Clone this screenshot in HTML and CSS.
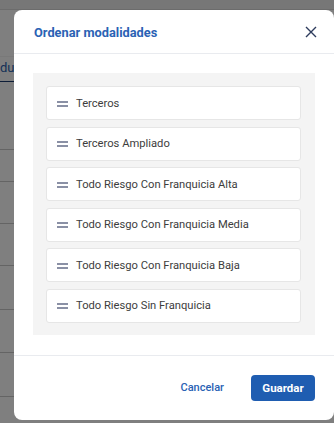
FILE: index.html
```html
<!DOCTYPE html>
<html lang="es">
<head>
    <meta charset="UTF-8">
    <meta name="viewport" content="width=device-width, initial-scale=1.0">
    <title>Ordenar modalidades</title>
    <link rel="stylesheet" href="styles.css">
</head>
<body>
    <div class="page">
        <div class="topbar"></div>
        <div class="band"></div>
        <div class="tabs"><span class="tab">du</span></div>
        <div class="rows">
            <div class="row r1"></div>
            <div class="row r2"></div>
            <div class="row r3"></div>
            <div class="row r3"></div>
            <div class="row r4"></div>
            <div class="row r5"></div>
            <div class="row r4"></div>
        </div>
    </div>
    <div class="overlay"></div>

    <div class="modal">
        <div class="modal-head">
            <h2 class="modal-title">Ordenar modalidades</h2>
            <a class="close" href="javascript:;">
                <svg width="12" height="12" viewBox="0 0 12 12">
                    <path d="M1 1L11 11M11 1L1 11" stroke="#2d3b5c" stroke-width="1.4" fill="none"/>
                </svg>
            </a>
        </div>
        <div class="modal-body">
            <ul class="list">
                <li class="item"><span class="grip"></span>Terceros</li>
                <li class="item"><span class="grip"></span>Terceros Ampliado</li>
                <li class="item"><span class="grip"></span>Todo Riesgo Con Franquicia Alta</li>
                <li class="item"><span class="grip"></span>Todo Riesgo Con Franquicia Media</li>
                <li class="item"><span class="grip"></span>Todo Riesgo Con Franquicia Baja</li>
                <li class="item"><span class="grip"></span>Todo Riesgo Sin Franquicia</li>
            </ul>
        </div>
        <div class="modal-foot">
            <a class="btn-text" href="javascript:;">Cancelar</a>
            <a class="btn" href="javascript:;">Guardar</a>
        </div>
    </div>
</body>
</html>
```

FILE: styles.css
```css
*{
    margin: 0;
    padding: 0;
    box-sizing: border-box;
}
a{
    text-decoration: none;
}
ul{
    list-style: none;
}
body{
    width: 334px;
    height: 423px;
    overflow: hidden;
    font-family: Roboto, "Liberation Sans", sans-serif;
    background: #fff;
}
.page{
    height: 423px;
}
.topbar{
    height: 10px;
    background: #eeeeee;
    border-bottom: 1px solid #d8d8d8;
}
.band{
    height: 47px;
    background: #ffffff;
    border-bottom: 1px solid #f2f2f2;
}
.tabs{
    height: 25px;
    border-bottom: 1px solid #1b3a6e;
    background: #fff;
}
.tab{
    display: inline-block;
    font-size: 13px;
    line-height: 22px;
    color: #2a5fae;
}
.rows{
    background: #fff;
}
.row{
    border-bottom: 1px solid #c8c8c8;
}
.r1{ height: 68px; }
.r2{ height: 32px; }
.r3{ height: 42px; }
.r4{ height: 44px; }
.r5{ height: 43px; }
.overlay{
    position: absolute;
    left: 0;
    top: 0;
    width: 334px;
    height: 423px;
    background: rgba(0, 0, 0, 0.5);
}
.modal{
    position: absolute;
    left: 14px;
    top: 10px;
    width: 320px;
    height: 410px;
    background: #fff;
    border-radius: 8px;
    display: flex;
    flex-direction: column;
}
.modal-head{
    height: 44px;
    padding: 0 16px 0 20px;
    display: flex;
    align-items: center;
    justify-content: space-between;
    border-bottom: 1px solid #e9ebef;
}
.modal-title{
    font-size: 12.8px;
    font-weight: 700;
    color: #2a62b4;
    padding-top: 1px;
}
.close{
    display: flex;
    width: 14px;
    height: 14px;
    align-items: center;
    justify-content: center;
    margin-top: 1px;
}
.modal-body{
    padding: 19px 19px 20px 19px;
}
.list{
    background: #f4f4f4;
    padding: 13px 14px 12px 13px;
    display: flex;
    flex-direction: column;
    gap: 6.5px;
}
.item{
    height: 34px;
    background: #fff;
    border: 1px solid #e6e6e6;
    border-radius: 3px;
    display: flex;
    align-items: center;
    padding-left: 10px;
    font-size: 11.2px;
    color: #3d3d3d;
}
.grip{
    width: 11px;
    height: 6px;
    border-top: 2px solid #8a90a5;
    border-bottom: 2px solid #8a90a5;
    margin-right: 8px;
    margin-top: 1px;
}
.modal-foot{
    flex: 1;
    border-top: 1px solid #e9ebef;
    padding: 0 19px 0 0;
    display: flex;
    align-items: center;
    justify-content: flex-end;
    gap: 27px;
}
.btn-text{
    font-size: 11px;
    font-weight: 500;
    color: #2a62b4;
}
.btn{
    display: inline-block;
    width: 64px;
    height: 26px;
    line-height: 26px;
    text-align: center;
    background: #1f5db1;
    color: #fff;
    border-radius: 4px;
    font-size: 11.5px;
    font-weight: 700;
}
```
